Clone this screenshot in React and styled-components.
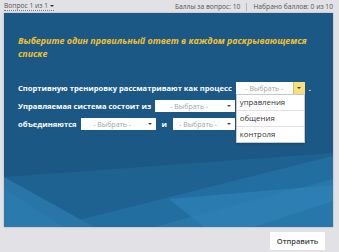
import React from 'react';
import styled, { createGlobalStyle } from 'styled-components';

const GlobalStyle = createGlobalStyle`
  html, body {
    margin: 0;
    padding: 0;
    background: #e2e1e5;
  }
  body {
    font-family: "Open Sans", "Noto Sans", sans-serif;
  }
`;

const Page = styled.div`
  width: 339px;
  height: 252px;
  display: flex;
  flex-direction: column;
  background: #e2e1e5;
  overflow: hidden;
`;

const TopBar = styled.div`
  height: 13px;
  display: flex;
  align-items: center;
  justify-content: space-between;
  padding: 0 6px 0 4px;
  font-size: 6.7px;
  color: #555;
`;

const QuestionPicker = styled.span`
  border-bottom: 1px dotted #777;
  line-height: 8px;
  display: inline-flex;
  align-items: center;
  gap: 2px;
`;

const Caret = styled.span`
  width: 0;
  height: 0;
  border-left: ${p => p.size || 2.5}px solid transparent;
  border-right: ${p => p.size || 2.5}px solid transparent;
  border-top: ${p => (p.size || 2.5) + 0.5}px solid ${p => p.color || '#333'};
`;

const Scores = styled.div`
  display: flex;
  align-items: center;
  gap: 6px;
`;

const Divider = styled.span`
  width: 1px;
  height: 8px;
  background: #b5b5b8;
`;

const Panel = styled.div`
  position: relative;
  margin: 0 6px 0 4px;
  height: 214px;
  background: #1b5885;
  box-shadow: 0 0 2px rgba(0, 0, 0, 0.25);
  padding: 21px 0 0 14px;
  box-sizing: border-box;
`;

const Backdrop = styled.svg`
  position: absolute;
  inset: 0;
  width: 100%;
  height: 100%;
`;

const Content = styled.div`
  position: relative;
  display: flex;
  flex-direction: column;
`;

const Heading = styled.div`
  color: #f2c22e;
  font-style: italic;
  font-weight: 700;
  font-size: 8.9px;
  line-height: 13px;
  width: 312px;
  margin-bottom: 19px;
`;

const Row = styled.div`
  display: flex;
  align-items: center;
  gap: 4px;
  height: 18px;
  color: #fff;
  font-weight: 700;
  font-size: 7.6px;
  white-space: nowrap;
`;

const SelectWrap = styled.div`
  position: relative;
`;

const SelectBox = styled.div`
  width: ${p => p.w}px;
  height: 12px;
  background: #fff;
  display: flex;
  align-items: center;
  font-weight: 400;
  font-size: 7px;
  color: #a3a3a3;
  box-sizing: border-box;
`;

const Placeholder = styled.span`
  flex: 1;
  text-align: center;
`;

const ArrowBox = styled.span`
  width: 12px;
  height: 12px;
  display: flex;
  align-items: center;
  justify-content: center;
  background: ${p => (p.active ? '#f6e07e' : 'transparent')};
  border-left: ${p => (p.active ? '1px solid #d8c060' : 'none')};
  box-sizing: border-box;
`;

const Menu = styled.ul`
  position: absolute;
  left: 0;
  top: 12px;
  width: 69px;
  margin: 0;
  padding: 0;
  list-style: none;
  background: #fff;
  border: 1px solid #c8c8c8;
  box-sizing: border-box;
  box-shadow: 0 1px 2px rgba(0, 0, 0, 0.2);
  z-index: 2;
`;

const MenuItem = styled.li`
  height: 15px;
  line-height: 15px;
  padding-left: 3px;
  font-weight: 400;
  font-size: 7.8px;
  color: #333;
  border-top: ${p => (p.first ? 'none' : '1px solid #e2e2e2')};
`;

const Footer = styled.div`
  flex: 1;
  display: flex;
  justify-content: flex-end;
  align-items: flex-start;
  padding: 5px 14px 0 0;
`;

const SubmitButton = styled.button`
  width: 55px;
  height: 18px;
  border: none;
  background: #fff;
  font-family: "Open Sans", "Noto Sans", sans-serif;
  font-size: 7.5px;
  font-weight: 600;
  color: #444;
  padding: 0;
`;

function Select({ w, active, open, options }) {
  return (
    <SelectWrap>
      <SelectBox w={w}>
        <Placeholder>- Выбрать -</Placeholder>
        <ArrowBox active={active}>
          <Caret size={2} color="#444" />
        </ArrowBox>
      </SelectBox>
      {open && (
        <Menu>
          {options.map((o, i) => (
            <MenuItem key={o} first={i === 0}>{o}</MenuItem>
          ))}
        </Menu>
      )}
    </SelectWrap>
  );
}

export default function App() {
  return (
    <>
      <GlobalStyle />
      <Page>
        <TopBar>
          <QuestionPicker>
            Вопрос 1 из 1 <Caret size={2} color="#333" />
          </QuestionPicker>
          <Scores>
            <span>Баллы за вопрос: 10</span>
            <Divider />
            <span>Набрано баллов: 0 из 10</span>
          </Scores>
        </TopBar>
        <Panel>
          <Backdrop viewBox="0 0 329 214" preserveAspectRatio="none">
            <polygon points="0,164 329,140 329,214 0,214" fill="#1e6291" />
            <polygon points="46,214 329,143 329,214" fill="#236ea1" />
            <polygon points="0,164 90,214 0,214" fill="#2975a8" />
            <polygon points="150,214 329,166 329,214" fill="#2877ab" />
            <polygon points="165,186 329,172 329,188 250,214 200,214" fill="#2e82b6" opacity="0.7" />
            <polygon points="0,176 60,214 0,214" fill="#2d7db0" opacity="0.6" />
          </Backdrop>
          <Content>
            <Heading>
              Выберите один правильный ответ в каждом раскрывающемся списке
            </Heading>
            <Row>
              Спортивную тренировку рассматривают как процесс
              <Select
                w={69}
                active
                open
                options={['управления', 'общения', 'контроля']}
              />
              <span>.</span>
            </Row>
            <Row>
              Управляемая система состоит из
              <Select w={80} />
            </Row>
            <Row>
              объединяются
              <Select w={75} />
              <span>&nbsp;и&nbsp;</span>
              <Select w={62} />
            </Row>
          </Content>
        </Panel>
        <Footer>
          <SubmitButton>Отправить</SubmitButton>
        </Footer>
      </Page>
    </>
  );
}
